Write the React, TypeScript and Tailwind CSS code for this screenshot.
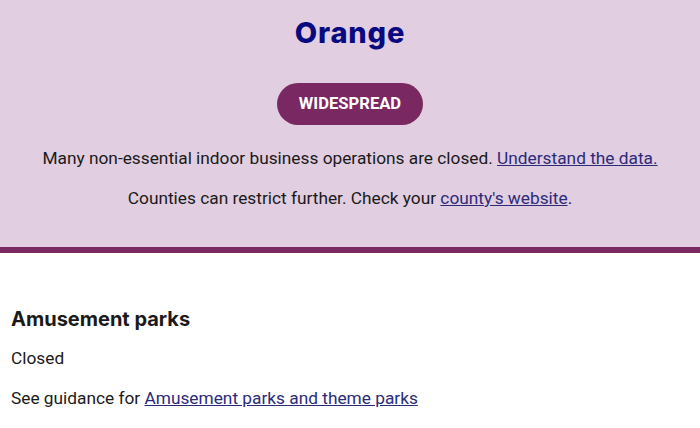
export default function App() {
  return (
    <div className="w-[700px] h-[428px] overflow-hidden bg-white font-['Roboto',sans-serif] text-[#1a1a1a]">
      <div className="bg-[#e1cee0] border-b-[6px] border-[#7a2862] flex flex-col items-center pt-[14px] pb-[37px]">
        <h1 className="font-['Inter',sans-serif] font-extrabold text-[29px] leading-[38px] text-[#0a0a80] tracking-[0.8px]">Orange</h1>
        <div className="mt-[31px] h-[42px] px-[22px] rounded-full bg-[#7a2862] text-white font-bold text-[16.6px] flex items-center">WIDESPREAD</div>
        <p className="mt-[21px] text-[17.3px] leading-[24px]">
          Many non-essential indoor business operations are closed.{" "}
          <a className="underline text-[#2b2b7a]">Understand the data.</a>
        </p>
        <p className="mt-[16px] text-[17.3px] leading-[24px]">
          Counties can restrict further. Check your{" "}
          <a className="underline text-[#2b2b7a]">county's website</a>.
        </p>
      </div>
      <div className="px-[11px] pt-[53px]">
        <h2 className="font-['Inter',sans-serif] font-bold text-[20px] leading-[26px]">Amusement parks</h2>
        <p className="mt-[14px] text-[17.3px] leading-[24px]">Closed</p>
        <p className="mt-[16px] text-[17.3px] leading-[24px]">
          See guidance for <a className="underline text-[#2b2b7a]">Amusement parks and theme parks</a>
        </p>
      </div>
    </div>
  );
}
